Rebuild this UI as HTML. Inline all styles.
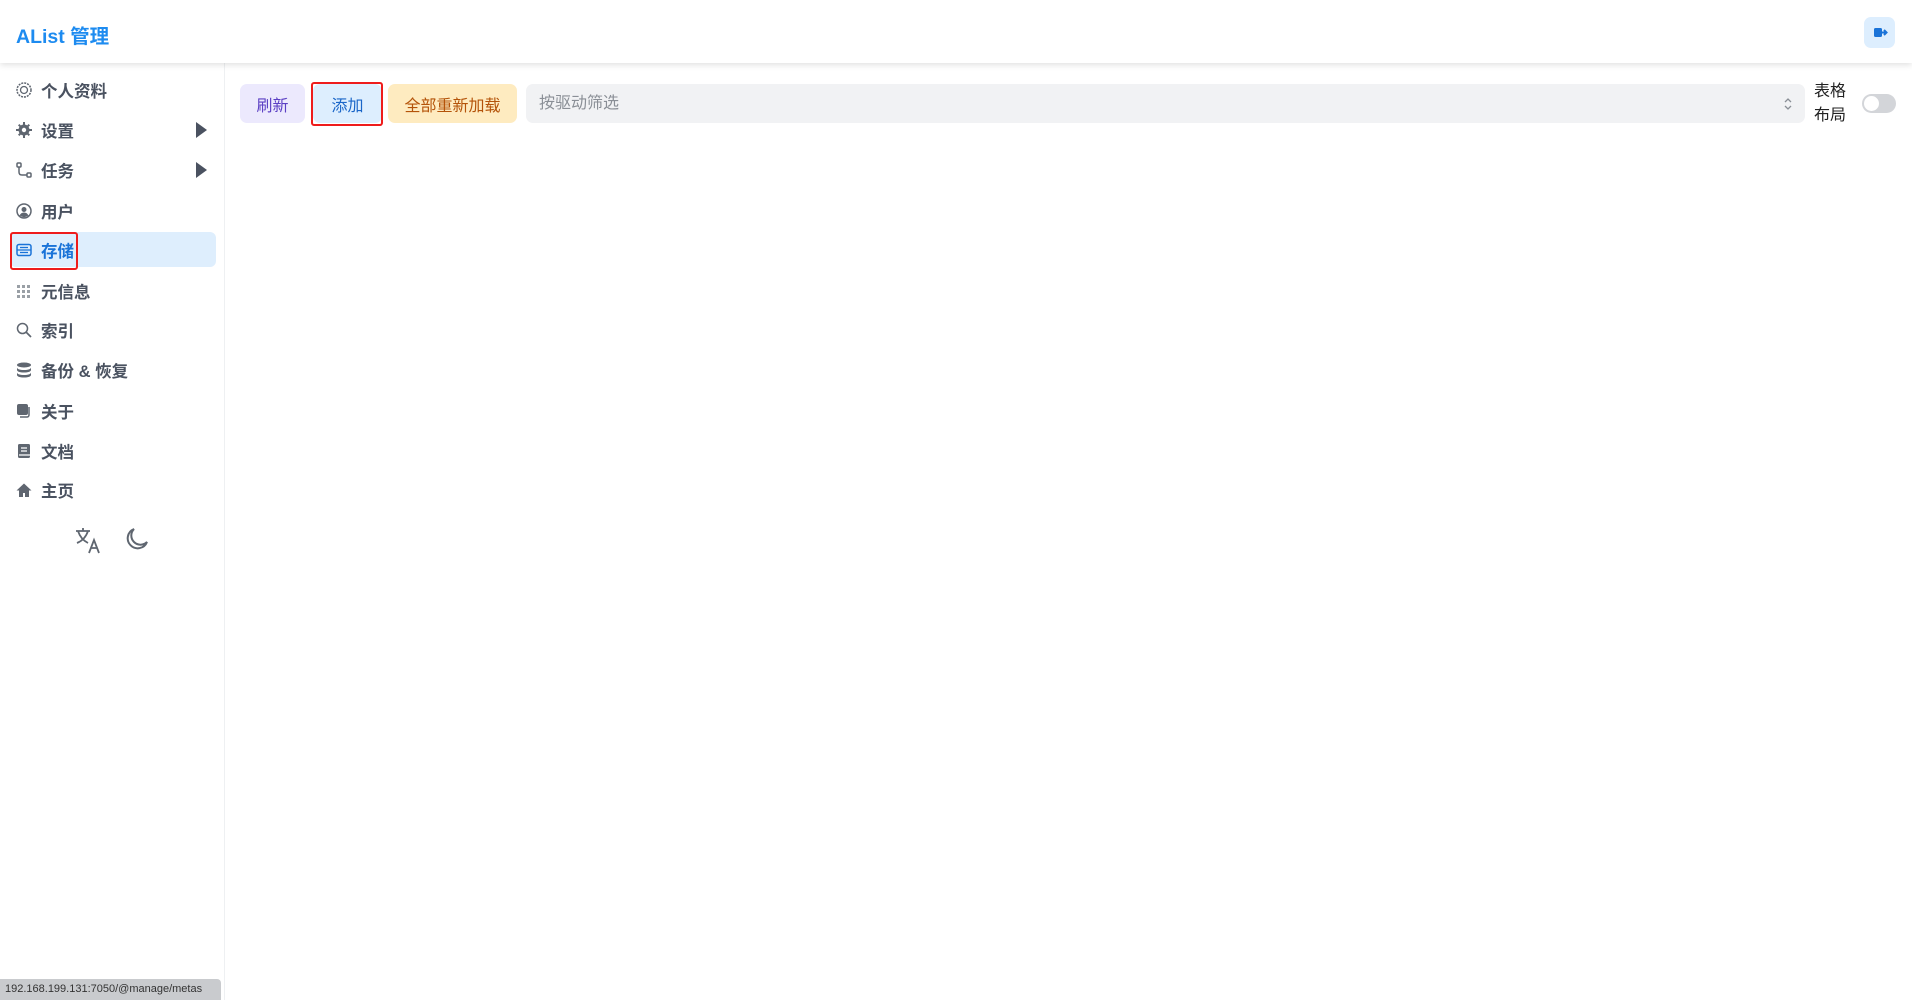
<!DOCTYPE html>
<html><head><meta charset="utf-8"><style>
*{box-sizing:border-box;margin:0;padding:0}
body{width:1912px;height:1000px;overflow:hidden;background:#fff;font-family:"Liberation Sans","Noto Sans CJK SC",sans-serif;position:relative;color:#333}
.hdr{position:absolute;left:0;top:0;width:1912px;height:63px;background:#fff;box-shadow:0 2px 6px rgba(0,0,0,.12);z-index:2}
.title{position:absolute;left:16px;top:20px;font-size:19.5px;font-weight:bold;color:#1d8bf0}
.logout{position:absolute;left:1864px;top:17px;width:31px;height:31px;border-radius:7px;background:#ddeefe}
.side{position:absolute;left:0;top:63px;width:225px;height:937px;border-right:1px solid #eef0f2}
.item{position:absolute;left:10px;width:206px;height:35px;display:flex;align-items:center;font-size:16.5px;font-weight:bold;color:#4a5260}
.item svg{margin-left:6px;margin-right:9px;width:16px;height:16px;fill:#5f6670}
.arrow{position:absolute;left:186px;top:10px;width:0;height:0;border-left:11px solid #4a5260;border-top:8px solid transparent;border-bottom:8px solid transparent}
.active{background:#deeefd;border-radius:6px;color:#1a73d8}
.redbox{position:absolute;border:2px solid #ee1c1c;border-radius:3px}
.btn{position:absolute;top:84px;height:39px;border-radius:7px;font-size:16px;display:flex;align-items:center;justify-content:center}
.sel{position:absolute;left:526px;top:84px;width:1279px;height:39px;border-radius:7px;background:#f1f2f4;color:#8a8f96;font-size:16px;padding-left:13px;line-height:39px}
.status{position:absolute;left:0;top:979px;width:221px;height:21px;background:#c9cbce;color:#333;font-size:11px;line-height:21px;padding-left:5px;border-top-right-radius:4px}
</style></head><body>
<div class="hdr"><div class="title">AList 管理</div>
<div class="logout"><svg width="31" height="31" viewBox="0 0 31 31"><rect x="10" y="11" width="8" height="9" rx="1.5" fill="#1a73d8"/><path d="M17 15.5h5M20 13l2.5 2.5L20 18" stroke="#1a73d8" stroke-width="2" fill="none"/></svg></div></div>
<div class="side"></div>
<div class="item" style="top:72px"><svg viewBox="0 0 16 16"><circle cx="8" cy="8" r="7" fill="none" stroke="#5f6670" stroke-width="1.5" stroke-dasharray="2 1"/><circle cx="8" cy="8" r="3.5" fill="none" stroke="#5f6670" stroke-width="1.3"/></svg>个人资料</div>
<div class="item" style="top:112px"><svg viewBox="0 0 16 16"><circle cx="8" cy="8" r="5.5"/><path d="M7 0h2v3H7zM7 13h2v3H7zM0 7h3v2H0zM13 7h3v2h-3zM2 3.4l1.4-1.4 2 2L4 5.4zM10.6 12l1.4-1.4 2 2-1.4 1.4zM12.6 2L14 3.4l-2 2L10.6 4zM2 12.6L4 10.6 5.4 12l-2 2z"/><circle cx="8" cy="8" r="2.2" fill="#fff"/></svg>设置<span class="arrow"></span></div>
<div class="item" style="top:152px"><svg viewBox="0 0 16 16" fill="none"><rect x="1" y="1" width="4" height="4" rx="1" fill="none" stroke="#5f6670" stroke-width="1.5"/><rect x="11" y="11" width="4" height="4" rx="1" fill="none" stroke="#5f6670" stroke-width="1.5"/><path d="M3 5v5c0 2 1 3 3 3h5" stroke="#5f6670" stroke-width="1.5" fill="none"/></svg>任务<span class="arrow"></span></div>
<div class="item" style="top:193px"><svg viewBox="0 0 16 16"><circle cx="8" cy="8" r="7" fill="none" stroke="#5f6670" stroke-width="1.5"/><circle cx="8" cy="6.5" r="2.5"/><path d="M3.5 12.5c1-2 2.5-3 4.5-3s3.5 1 4.5 3L8 14.5z"/></svg>用户</div>
<div class="item active" style="top:232px"><svg viewBox="0 0 16 16" style="fill:none"><rect x="1" y="2.5" width="14" height="11" rx="2" stroke="#1a73d8" stroke-width="1.5"/><path d="M1 8h14M4 5.5h8M4 10.5h8" stroke="#1a73d8" stroke-width="1.3"/></svg>存储</div>
<div class="item" style="top:273px"><svg viewBox="0 0 16 16"><g fill="#9aa0a6"><rect x="1" y="2" width="3" height="3"/><rect x="6" y="2" width="3" height="3"/><rect x="11" y="2" width="3" height="3"/><rect x="1" y="7" width="3" height="3"/><rect x="6" y="7" width="3" height="3"/><rect x="11" y="7" width="3" height="3"/><rect x="1" y="12" width="3" height="3"/><rect x="6" y="12" width="3" height="3"/><rect x="11" y="12" width="3" height="3"/></g></svg>元信息</div>
<div class="item" style="top:312px"><svg viewBox="0 0 16 16" fill="none"><circle cx="6.5" cy="6.5" r="5" fill="none" stroke="#5f6670" stroke-width="1.5"/><path d="M10 10l5 5" stroke="#5f6670" stroke-width="1.7"/></svg>索引</div>
<div class="item" style="top:352px"><svg viewBox="0 0 16 16"><ellipse cx="8" cy="3" rx="7" ry="2.5"/><path d="M1 5.5c0 1.5 3 2.5 7 2.5s7-1 7-2.5V8c0 1.5-3 2.5-7 2.5S1 9.5 1 8zM1 10.5c0 1.5 3 2.5 7 2.5s7-1 7-2.5V13c0 1.5-3 2.5-7 2.5S1 14.5 1 13z"/></svg>备份 &amp; 恢复</div>
<div class="item" style="top:393px"><svg viewBox="0 0 16 16"><rect x="1" y="1" width="11" height="11" rx="2"/><path d="M13 4v8a2 2 0 0 1-2 2H4" stroke="#5f6670" stroke-width="1.5" fill="none"/></svg>关于</div>
<div class="item" style="top:433px"><svg viewBox="0 0 16 16"><rect x="2" y="1" width="12" height="14" rx="1.5"/><path d="M5 5h6M5 8h6M3 12h11" stroke="#fff" stroke-width="1.3"/></svg>文档</div>
<div class="item" style="top:472px"><svg viewBox="0 0 16 16"><path d="M8 1.5L0.5 8.5H3V15h4v-4h2v4h4V8.5h2.5z"/></svg>主页</div>
<svg style="position:absolute;left:74px;top:526px" width="30" height="28" viewBox="0 0 30 28" fill="none" stroke="#5f6670" stroke-width="1.8"><path d="M2 5h14M9 2v3M4 5c2 6 6 10 10 12M14 5c-2 6-6 10-11 12"/><path d="M15 27l5-13 5 13M17 22h6"/></svg>
<svg style="position:absolute;left:123px;top:527px" width="26" height="26" viewBox="0 0 26 26" fill="none" stroke="#5f6670" stroke-width="2"><path d="M11 2a10 10 0 1 0 13 13A9 9 0 0 1 11 2z"/></svg>
<div class="redbox" style="left:10px;top:232px;width:68px;height:38px"></div>
<div class="btn" style="left:240px;width:65px;background:#ece9fd;color:#5b3fc4">刷新</div>
<div class="btn" style="left:313px;width:69px;background:#ddeefe;color:#1a66c8">添加</div>
<div class="redbox" style="left:311px;top:82px;width:72px;height:44px"></div>
<div class="btn" style="left:388px;width:129px;background:#feebc0;color:#b45309">全部重新加载</div>
<div class="sel">按驱动筛选<svg style="position:absolute;right:12px;top:13px" width="10" height="14" viewBox="0 0 10 14" fill="none" stroke="#8a8f96" stroke-width="1.3"><path d="M2 5l3-3 3 3M2 9l3 3 3-3"/></svg></div>
<div style="position:absolute;left:1814px;top:80px;font-size:16px;line-height:24px;color:#222">表格<br>布局</div>
<div style="position:absolute;left:1862px;top:94px;width:34px;height:19px;border-radius:10px;background:#d3d5d9"><div style="position:absolute;left:2px;top:2px;width:15px;height:15px;border-radius:50%;background:#fff"></div></div>
<div class="status">192.168.199.131:7050/@manage/metas</div>
</body></html>
